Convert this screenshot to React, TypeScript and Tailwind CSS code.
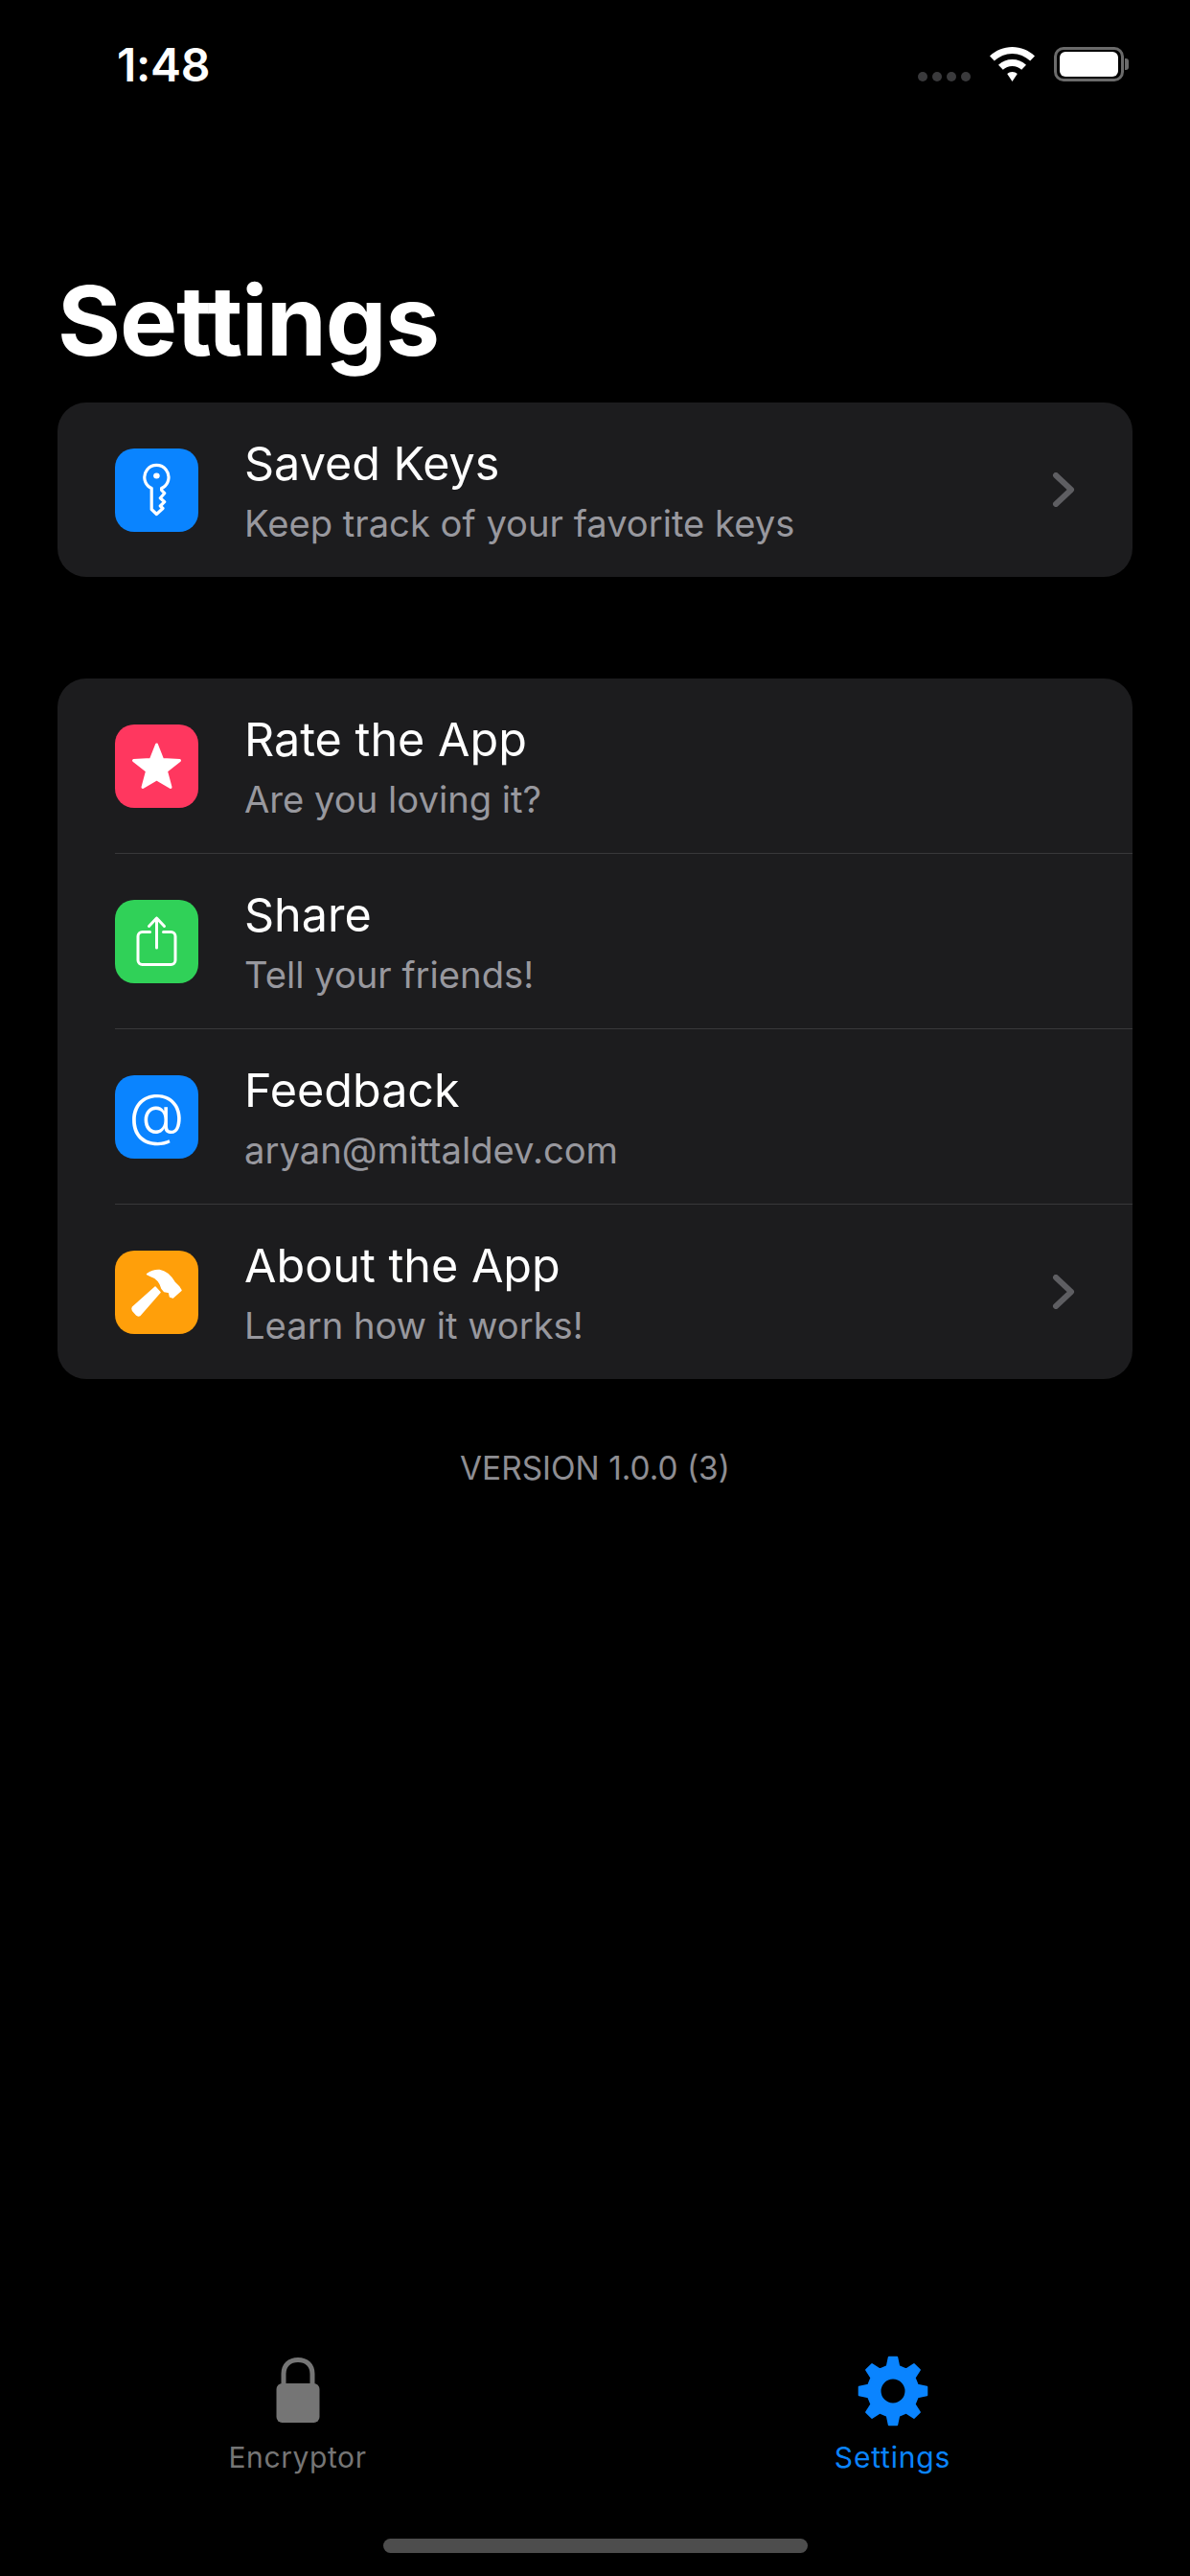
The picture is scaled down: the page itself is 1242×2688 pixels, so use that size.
import type { ReactNode } from 'react'

const gearPath = (() => {
  const cx = 37
  const cy = 37
  const points: string[] = []
  for (let i = 0; i < 8; i++) {
    const a = (i * Math.PI) / 4 - Math.PI / 2
    const step = Math.PI / 8
    const at = (r: number, t: number) =>
      `${(cx + r * Math.cos(t)).toFixed(1)} ${(cy + r * Math.sin(t)).toFixed(1)}`
    points.push(at(26.5, a - step * 0.6), at(35.5, a - step * 0.3), at(35.5, a + step * 0.3), at(26.5, a + step * 0.6))
  }
  return `M${points.join('L')}Z`
})()

function KeyIcon() {
  return (
    <svg viewBox="0 0 87 87" className="size-full" fill="none" stroke="white" strokeWidth="3.2" strokeLinejoin="round">
      <path d="M38.2 41.5A12.6 12.6 0 1 1 48.6 41.5L48.6 43.5L51.7 46.7L47.3 51.7L51.7 55.7L47.3 60L50 62.5L43.4 68.5L38.2 63.5Z" />
      <ellipse cx="43.4" cy="28.6" rx="3.3" ry="3" fill="white" stroke="none" />
    </svg>
  )
}

function StarIcon() {
  return (
    <svg viewBox="0 0 87 87" className="size-full" fill="white" stroke="white" strokeWidth="3" strokeLinejoin="round">
      <path d="M43.5 21L49.5 36.4L67.5 37.6L53.5 48.6L58 65.5L43.5 57L29 65.5L33.5 48.6L19.5 37.6L37.5 36.4Z" />
    </svg>
  )
}

function ShareIcon() {
  return (
    <svg viewBox="0 0 87 87" className="size-full" fill="none" stroke="white" strokeWidth="3" strokeLinecap="round" strokeLinejoin="round">
      <path d="M36.5 33.5H28.5A4.5 4.5 0 0 0 24 38V63A4.5 4.5 0 0 0 28.5 67.5H58.5A4.5 4.5 0 0 0 63 63V38A4.5 4.5 0 0 0 58.5 33.5H50.5" />
      <path d="M43.5 50V19M35.5 27.5L43.5 19L51.5 27.5" />
    </svg>
  )
}

function HammerIcon() {
  return (
    <svg viewBox="0 0 87 87" className="size-full" fill="white" stroke="white" strokeWidth="1.5" strokeLinejoin="round">
      <path d="M18.5 59L42 38L47 43.5L26 67.5Q24 68.5 22.5 67L18.5 62.5Q17.5 60.5 18.5 59Z" />
      <path d="M33.5 24.5Q40 20 46.5 20.5Q55.5 22 62 33L66.5 37.5L69 41.5L60.5 49L57.5 48L56.5 43.5L51.5 42.5L49 39.5Q46.5 29.5 37.5 26.5Z" />
    </svg>
  )
}

function Chevron() {
  return (
    <svg viewBox="0 0 24 36" className="h-[36px] w-[24px]" fill="none" stroke="#5e5e62" strokeWidth="6" strokeLinecap="round" strokeLinejoin="round">
      <path d="M4 3L20 18L4 33" />
    </svg>
  )
}

function Row({
  color,
  icon,
  title,
  subtitle,
  chevron,
}: {
  color: string
  icon: ReactNode
  title: string
  subtitle: string
  chevron?: boolean
}) {
  return (
    <div className="flex h-[182px] items-center pl-[60px]">
      <div className={`flex size-[87px] shrink-0 items-center justify-center rounded-[20px] ${color}`}>{icon}</div>
      <div className="ml-[48px] flex h-full flex-1 items-center pr-[60px]">
        <div className="flex flex-1 flex-col pt-[3px]">
          <span className="text-[48.5px] leading-[60px] text-white">{title}</span>
          <span className="mt-[7px] text-[38.2px] leading-[50px] text-[#98989e]">{subtitle}</span>
        </div>
        {chevron && <Chevron />}
      </div>
    </div>
  )
}

function Divider() {
  return <div className="ml-[60px] h-px bg-[#38383a]" />
}

export default function App() {
  return (
    <div className="flex h-[2688px] w-[1242px] flex-col bg-black font-['Inter',sans-serif] text-white">
      {/* status bar */}
      <div className="relative mt-[50px] flex h-[49px] shrink-0 items-start px-[64px]">
        <span className="ml-[58px] text-[48px] font-semibold leading-[36px] tracking-[-0.3px]">1:48</span>
        <div className="ml-auto flex items-end gap-[20px] -mt-[1px]">
          <div className="flex gap-[5px]">
            {[0, 1, 2, 3].map((i) => (
              <div key={i} className="size-[10px] rounded-full bg-[#3a3a3c]" />
            ))}
          </div>
          <svg viewBox="0 0 47 36" className="h-[36px] w-[47px]" fill="white">
            <path d="M23.5 0C14.5 0 6.5 3.5 0 9.5L4.8 14.5C9.8 10 16.3 7 23.5 7C30.7 7 37.2 10 42.2 14.5L47 9.5C40.5 3.5 32.5 0 23.5 0Z" />
            <path d="M23.5 13C18 13 13 15 9 18.7L13.8 23.7C16.4 21.4 19.8 20 23.5 20C27.2 20 30.6 21.4 33.2 23.7L38 18.7C34 15 29 13 23.5 13Z" />
            <path d="M23.5 26C21.5 26 19.6 26.8 18.2 28L23.5 36L28.8 28C27.4 26.8 25.5 26 23.5 26Z" />
          </svg>
          <div className="flex items-center">
            <div className="flex h-[36px] w-[73px] items-center justify-center rounded-[10px] border-[3px] border-[#6b6b6b]">
              <div className="h-[26px] w-[61px] rounded-[6px] bg-white" />
            </div>
            <div className="ml-[1px] h-[12px] w-[4px] rounded-r-[3px] bg-[#6b6b6b]" />
          </div>
        </div>
      </div>

      <h1 className="ml-[60px] mt-[175px] text-[101px] font-bold leading-[120px] tracking-[-1.2px]">Settings</h1>

      <div className="mx-[60px] mt-[26px] overflow-hidden rounded-[30px] bg-[#1c1c1e]">
        <Row
          color="bg-[#0a84ff]"
          icon={<KeyIcon />}
          title="Saved Keys"
          subtitle="Keep track of your favorite keys"
          chevron
        />
      </div>

      <div className="mx-[60px] mt-[106px] overflow-hidden rounded-[30px] bg-[#1c1c1e]">
        <Row color="bg-[#ff375f]" icon={<StarIcon />} title="Rate the App" subtitle="Are you loving it?" />
        <Divider />
        <Row color="bg-[#30d158]" icon={<ShareIcon />} title="Share" subtitle="Tell your friends!" />
        <Divider />
        <Row
          color="bg-[#0a84ff]"
          icon={<span className="-translate-y-[3px] text-[60px] font-light leading-none text-white">@</span>}
          title="Feedback"
          subtitle="aryan@mittaldev.com"
        />
        <Divider />
        <Row
          color="bg-[#ff9f0a]"
          icon={<HammerIcon />}
          title="About the App"
          subtitle="Learn how it works!"
          chevron
        />
      </div>

      <p className="mt-[73px] text-center text-[33.4px] leading-[40px] text-[#8e8e93]">VERSION 1.0.0 (3)</p>

      {/* tab bar */}
      <div className="mt-auto flex flex-col">
        <div className="flex">
          <div className="flex w-[621px] flex-col items-center">
            <svg viewBox="0 0 48 70" className="h-[70px] w-[48px]" fill="#757575">
              <path d="M9 28V17C9 8 15 2.5 24 2.5S39 8 39 17V28" fill="none" stroke="#757575" strokeWidth="5" />
              <rect x="1.5" y="27" width="45" height="41" rx="6" />
            </svg>
            <span className="mt-[16px] text-[30px] leading-[36px] tracking-[0.6px] text-[#757575]">Encryptor</span>
          </div>
          <div className="flex w-[621px] flex-col items-center text-[#0a84ff]">
            <svg viewBox="0 0 74 74" className="-mt-[2px] h-[74px] w-[74px]" fill="#0a84ff" stroke="#0a84ff" strokeWidth="2" strokeLinejoin="round" fillRule="evenodd">
              <path d={`${gearPath}M37 23.5A13.5 13.5 0 1 0 37 50.5A13.5 13.5 0 1 0 37 23.5Z`} />
            </svg>
            <span className="mt-[14px] text-[30px] leading-[36px] tracking-[0.8px]">Settings</span>
          </div>
        </div>
        <div className="mx-auto mb-[24px] mt-[67px] h-[15px] w-[443px] rounded-full bg-[#4d4d4d]" />
      </div>
    </div>
  )
}
